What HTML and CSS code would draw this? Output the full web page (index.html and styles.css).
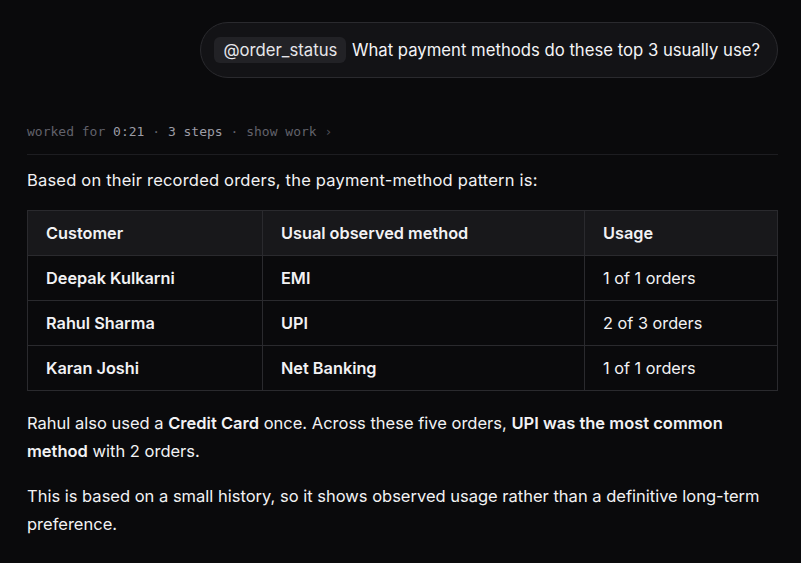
FILE: index.html
```html
<!DOCTYPE html>
<html>
<head>
<meta charset="utf-8">
<link rel="stylesheet" href="styles.css">
</head>
<body>
<main class="thread">
  <div class="user-row">
    <div class="user-bubble"><span class="mention">@order_status</span> What payment methods do these top 3 usually use?</div>
  </div>
  <div class="meta">worked for <span class="hi">0:21</span> · <span class="hi">3 steps</span> · show work <span class="chev">›</span></div>
  <div class="answer">
    <p class="lead">Based on their recorded orders, the payment-method pattern is:</p>
    <table class="tbl">
      <thead>
        <tr><th class="c1">Customer</th><th class="c2">Usual observed method</th><th class="c3">Usage</th></tr>
      </thead>
      <tbody>
        <tr><td class="b">Deepak Kulkarni</td><td class="b">EMI</td><td>1 of 1 orders</td></tr>
        <tr><td class="b">Rahul Sharma</td><td class="b">UPI</td><td>2 of 3 orders</td></tr>
        <tr><td class="b">Karan Joshi</td><td class="b">Net Banking</td><td>1 of 1 orders</td></tr>
      </tbody>
    </table>
    <p>Rahul also used a <strong>Credit Card</strong> once. Across these five orders, <strong>UPI was the most common method</strong> with 2 orders.</p>
    <p class="last">This is based on a small history, so it shows observed usage rather than a definitive long-term preference.</p>
  </div>
</main>
</body>
</html>
```
FILE: styles.css
```css
html, body {
  margin: 0;
  padding: 0;
  background: #0a0a0c;
  color: #f2f2f4;
  font-family: Inter, "Noto Sans", sans-serif;
}
.thread {
  padding: 22px 23px 0 27px;
  width: 751px;
}
.user-row {
  display: flex;
  justify-content: flex-end;
}
.user-bubble {
  background: #131316;
  border: 1px solid #2a2a2e;
  border-radius: 28px;
  padding: 14px 17px 14px 13px;
  font-size: 16.7px;
  line-height: 26px;
  color: #f4f4f6;
}
.mention {
  display: inline-block;
  background: #222226;
  border-radius: 6px;
  padding: 0 9px 0 9px;
  margin-right: 1px;
  color: #e6e6ea;
}
.meta {
  margin-top: 45px;
  font-family: "DejaVu Sans Mono", monospace;
  font-size: 13px;
  line-height: 18px;
  color: #62626b;
  padding-bottom: 13px;
  border-bottom: 1px solid #1d1d21;
}
.meta .hi { color: #9c9ca6; }
.meta .chev { color: #4e4e56; }
.answer p {
  margin: 14px 0 14px;
  font-size: 16.5px;
  line-height: 28px;
}
.answer p.lead { margin-top: 11px; letter-spacing: 0.2px; }
.answer .tbl + p { margin-top: 18px; }
.answer p.last { margin-top: 17px; }
.tbl {
  width: 100%;
  table-layout: fixed;
  border-collapse: collapse;
  font-size: 16.3px;
  margin: 16px 0 0;
}
.tbl th, .tbl td {
  border: 1px solid #2a2a2e;
  text-align: left;
  padding: 0 17px 0 18px;
  height: 44px;
}
.tbl th {
  background: #18181b;
  font-weight: 600;
}
.tbl td.b { font-weight: 600; }
.tbl .c1 { width: 199px; }
.tbl .c2 { width: 286px; }
strong { font-weight: 600; }
```
